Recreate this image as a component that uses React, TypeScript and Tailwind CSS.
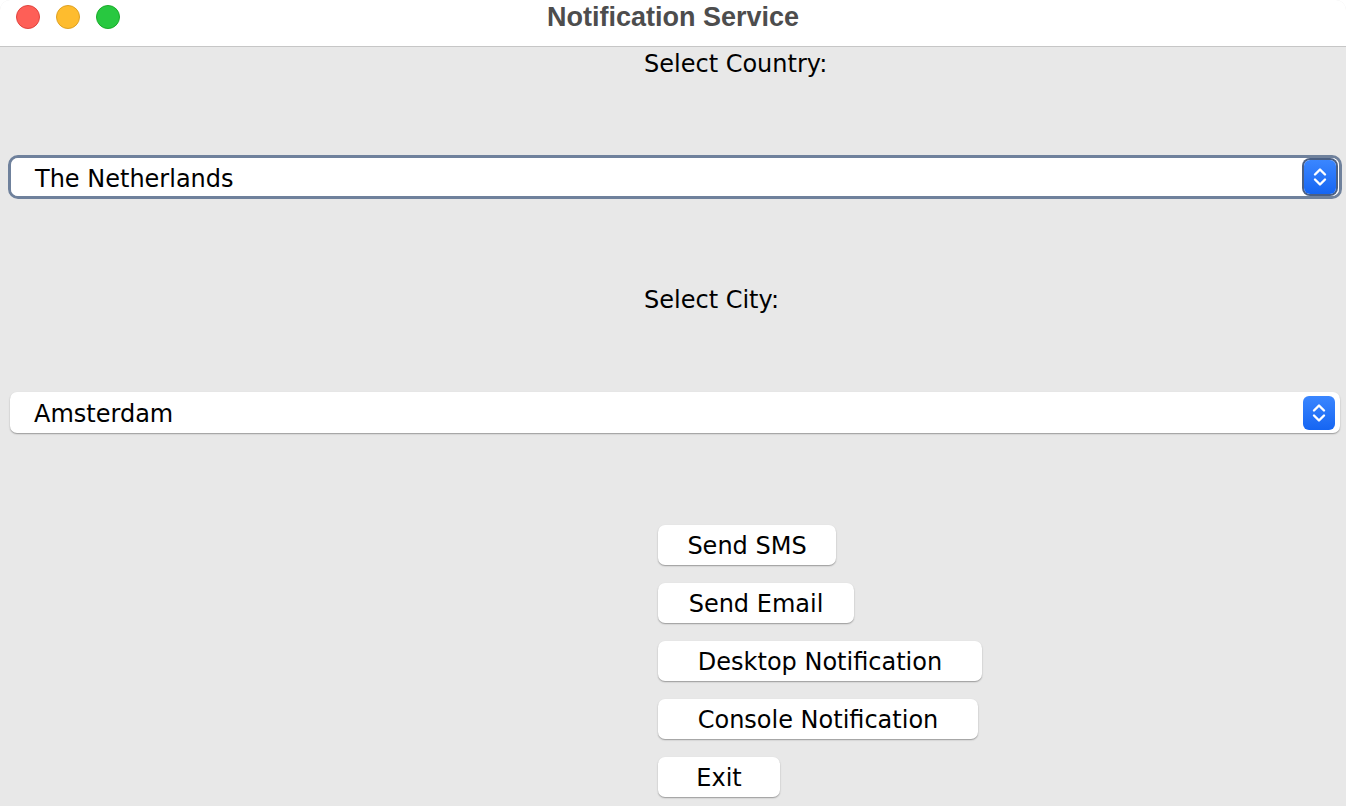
import React from 'react';

const font = { fontFamily: '"DejaVu Sans", "Liberation Sans", sans-serif' };

function Stepper({ focused }: { focused?: boolean }) {
  return (
    <div
      className={`flex h-[34px] w-[32px] items-center justify-center rounded-[6px] bg-gradient-to-b from-[#3a86ff] to-[#1565f2] ${
        focused ? 'ring-2 ring-[#4a5f84]' : ''
      }`}
    >
      <svg width="16" height="24" viewBox="0 0 16 24" fill="none">
        <path d="M3 9.5 L8 4.5 L13 9.5" stroke="white" strokeWidth="2.4" strokeLinecap="round" strokeLinejoin="round" />
        <path d="M3 14.5 L8 19.5 L13 14.5" stroke="white" strokeWidth="2.4" strokeLinecap="round" strokeLinejoin="round" />
      </svg>
    </div>
  );
}

function Combo({ value, focused }: { value: string; focused?: boolean }) {
  if (focused) {
    return (
      <div className="ml-[8px] mr-[4px] h-[44px] rounded-[10px] border-[3px] border-[#6f819c]">
        <div className="flex h-full items-center justify-between rounded-[7px] bg-white pl-[24px] pr-[3px]">
          <span className="pt-[3px] text-[24px] text-black">{value}</span>
          <Stepper focused />
        </div>
      </div>
    );
  }
  return (
    <div className="ml-[10px] mr-[6px] flex h-[41px] items-center justify-between rounded-[7px] bg-white pl-[24px] pr-[5px] shadow-[0_1px_1.5px_rgba(0,0,0,0.35)]">
      <span className="pt-[3px] text-[24px] text-black">{value}</span>
      <Stepper />
    </div>
  );
}

function Button({ label, width }: { label: string; width: string }) {
  return (
    <button
      className={`flex h-[40px] items-center justify-center rounded-[7px] bg-white pt-[1px] text-[24px] text-black shadow-[0_1px_1.5px_rgba(0,0,0,0.35)] ${width}`}
    >
      {label}
    </button>
  );
}

export default function App() {
  return (
    <div className="h-[806px] w-[1346px] overflow-hidden rounded-t-[10px] bg-[#e8e8e8]" style={font}>
      <div className="relative flex h-[47px] items-center justify-center border-b border-[#c6c6c6] bg-white">
        <div className="absolute left-[16px] top-[5px] flex gap-[16px]">
          <span className="h-[24px] w-[24px] rounded-full border border-[#e0443e] bg-[#fe5f57]" />
          <span className="h-[24px] w-[24px] rounded-full border border-[#dea123] bg-[#febc2e]" />
          <span className="h-[24px] w-[24px] rounded-full border border-[#1aab29] bg-[#28c840]" />
        </div>
        <span className="-mt-[12px] text-[27px] font-bold text-[#4d4d4d]" style={{ fontFamily: '"Liberation Sans", Arial, sans-serif' }}>
          Notification Service
        </span>
      </div>

      <div className="h-[32px] pl-[644px] pt-[1px] text-[24px] leading-[32px] text-black">Select Country:</div>
      <div className="mt-[76px]">
        <Combo value="The Netherlands" focused />
      </div>

      <div className="mt-[84px] h-[32px] pl-[644px] pt-[1px] text-[24px] leading-[32px] text-black">Select City:</div>
      <div className="mt-[77px]">
        <Combo value="Amsterdam" />
      </div>

      <div className="mt-[92px] flex flex-col items-start gap-[18px] pl-[658px]">
        <Button label="Send SMS" width="w-[178px]" />
        <Button label="Send Email" width="w-[196px]" />
        <Button label="Desktop Notification" width="w-[324px]" />
        <Button label="Console Notification" width="w-[320px]" />
        <Button label="Exit" width="w-[122px]" />
      </div>
    </div>
  );
}
